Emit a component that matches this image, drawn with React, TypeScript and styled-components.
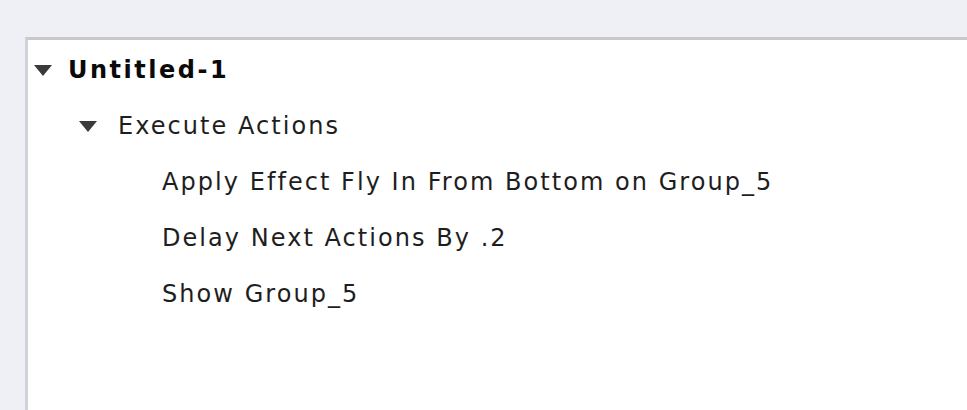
import * as React from "react";
import styled, { createGlobalStyle } from "styled-components";

const GlobalStyle = createGlobalStyle`
  html, body {
    margin: 0;
    padding: 0;
    background: #eff0f5;
    overflow: hidden;
  }
`;

const Page = styled.div`
  height: 410px;
  padding: 37px 0 0 25px;
  box-sizing: border-box;
`;

const Panel = styled.div`
  height: 100%;
  background: #ffffff;
  border-top: 3px solid #c9c9cc;
  border-left: 3px solid #d2d3d8;
  padding-top: 2px;
  box-sizing: border-box;
  font-family: "DejaVu Sans", Verdana, sans-serif;
  font-size: 24px;
  color: #1a1a1a;
`;

const Row = styled.div<{ $indent: number }>`
  display: flex;
  align-items: center;
  height: 56px;
  padding-left: ${(p) => p.$indent}px;
  white-space: nowrap;
`;

const Toggle = styled.span<{ $width: number }>`
  display: inline-flex;
  align-items: center;
  width: ${(p) => p.$width}px;
  flex: none;
`;

const Label = styled.span<{ $bold?: boolean }>`
  font-weight: ${(p) => (p.$bold ? 700 : 400)};
  letter-spacing: ${(p) => (p.$bold ? "2.5px" : "2.05px")};
  color: ${(p) => (p.$bold ? "#0a0a0a" : "#1e1e1e")};
`;

const Arrow = () => (
  <svg width="18" height="11" viewBox="0 0 18 11">
    <path d="M0 0 H18 L9 11 Z" fill="#3a3a3a" />
  </svg>
);

const rows = [
  { indent: 6, toggle: 34, label: "Untitled-1", bold: true, open: true },
  { indent: 51, toggle: 39, label: "Execute Actions", open: true },
  { indent: 134, toggle: 0, label: "Apply Effect Fly In From Bottom on Group_5" },
  { indent: 134, toggle: 0, label: "Delay Next Actions By .2" },
  { indent: 134, toggle: 0, label: "Show Group_5" },
];

export default function App() {
  return (
    <>
      <GlobalStyle />
      <Page>
        <Panel>
          {rows.map((r) => (
            <Row key={r.label} $indent={r.indent}>
              {r.open && (
                <Toggle $width={r.toggle}>
                  <Arrow />
                </Toggle>
              )}
              <Label $bold={r.bold}>{r.label}</Label>
            </Row>
          ))}
        </Panel>
      </Page>
    </>
  );
}
